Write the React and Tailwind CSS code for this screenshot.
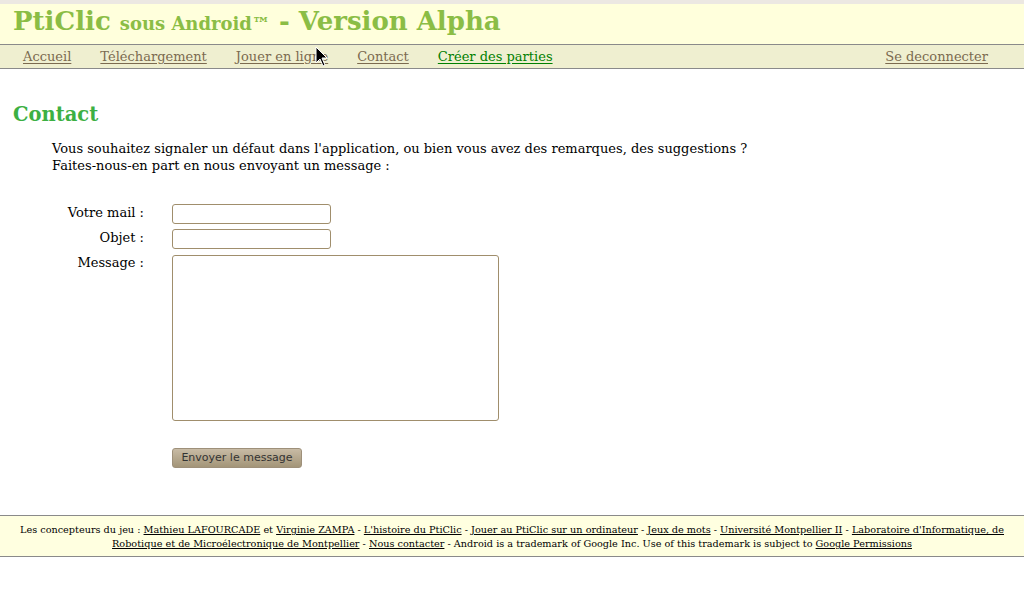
import React from "react";

const serif = { fontFamily: '"DejaVu Serif", serif' };

function NavLink({ children, green }) {
  return (
    <a
      href="#"
      className={
        "underline underline-offset-2 " +
        (green ? "text-[#008000]" : "text-[#7b6a4f]")
      }
    >
      {children}
    </a>
  );
}

function Cursor() {
  return (
    <svg
      className="absolute left-[315px] top-[46px]"
      width="14"
      height="22"
      viewBox="0 0 14 22"
    >
      <path
        d="M1 1 L1 17 L5 13 L8 20 L10 19 L7 12 L12 12 Z"
        fill="#000"
        stroke="#fff"
        strokeWidth="1"
      />
    </svg>
  );
}

function FooterLink({ children }) {
  return (
    <a href="#" className="underline text-black">
      {children}
    </a>
  );
}

export default function App() {
  return (
    <div className="relative min-h-[600px] bg-white text-black" style={serif}>
      <div className="h-[4px] bg-[#ece8e2]" />
      <header className="h-[40px] bg-[#ffffdc] px-[13px] pt-[1px]">
        <h1 className="text-[26px] font-bold leading-[32px] text-[#8bbd45]">
          PtiClic <span className="text-[18px]">sous Android™</span> - Version Alpha
        </h1>
      </header>
      <nav className="flex h-[25px] items-center justify-between border-y border-[#8a8a8a] bg-[#efefd0] pl-[23px] pr-[36px] text-[13px]">
        <div className="flex gap-[29px]">
          <NavLink>Accueil</NavLink>
          <NavLink>Téléchargement</NavLink>
          <NavLink>Jouer en ligne</NavLink>
          <NavLink>Contact</NavLink>
          <NavLink green>Créer des parties</NavLink>
        </div>
        <NavLink>Se deconnecter</NavLink>
      </nav>
      <Cursor />

      <main className="px-[13px] pt-[32px]">
        <h2 className="text-[19.5px] font-bold leading-[28px] text-[#3cb043]">Contact</h2>
        <p className="mt-[11px] pl-[39px] text-[13px] leading-[17px]">
          Vous souhaitez signaler un défaut dans l'application, ou bien vous avez des remarques, des suggestions ?
          <br />
          Faites-nous-en part en nous envoyant un message :
        </p>

        <form className="mt-[30px] grid grid-cols-[131px_auto] gap-x-[28px] gap-y-[5px] text-[13px]">
          <label className="text-right leading-[17px]">Votre mail :</label>
          <input className="h-[20px] w-[159px] rounded-[3px] border border-[#a08e6c] bg-white" />
          <label className="text-right leading-[17px]">Objet :</label>
          <input className="h-[20px] w-[159px] rounded-[3px] border border-[#a08e6c] bg-white" />
          <label className="text-right leading-[17px]">Message :</label>
          <textarea className="mt-[1px] h-[166px] w-[327px] resize-none rounded-[3px] border border-[#a08e6c] bg-white" />
          <div />
          <div className="pt-[21px]">
            <button
              type="button"
              className="h-[20px] w-[130px] rounded-[3px] border border-[#9e907a] bg-gradient-to-b from-[#c8bba5] to-[#a39578] text-[11px] text-[#333333]"
              style={{ fontFamily: '"DejaVu Sans", sans-serif' }}
            >
              Envoyer le message
            </button>
          </div>
        </form>
      </main>

      <footer className="mt-[47px] border-y border-[#8a8a8a] bg-[#ffffe0] px-[18px] pt-[7px] pb-[5px] text-center text-[9.7px] leading-[14px]">
        Les concepteurs du jeu : <FooterLink>Mathieu LAFOURCADE</FooterLink> et{" "}
        <FooterLink>Virginie ZAMPA</FooterLink> - <FooterLink>L'histoire du PtiClic</FooterLink> -{" "}
        <FooterLink>Jouer au PtiClic sur un ordinateur</FooterLink> - <FooterLink>Jeux de mots</FooterLink> -{" "}
        <FooterLink>Université Montpellier II</FooterLink> -{" "}
        <FooterLink>Laboratoire d'Informatique, de Robotique et de Microélectronique de Montpellier</FooterLink> -{" "}
        <FooterLink>Nous contacter</FooterLink> - Android is a trademark of Google Inc. Use of this trademark is subject to{" "}
        <FooterLink>Google Permissions</FooterLink>
      </footer>
    </div>
  );
}
